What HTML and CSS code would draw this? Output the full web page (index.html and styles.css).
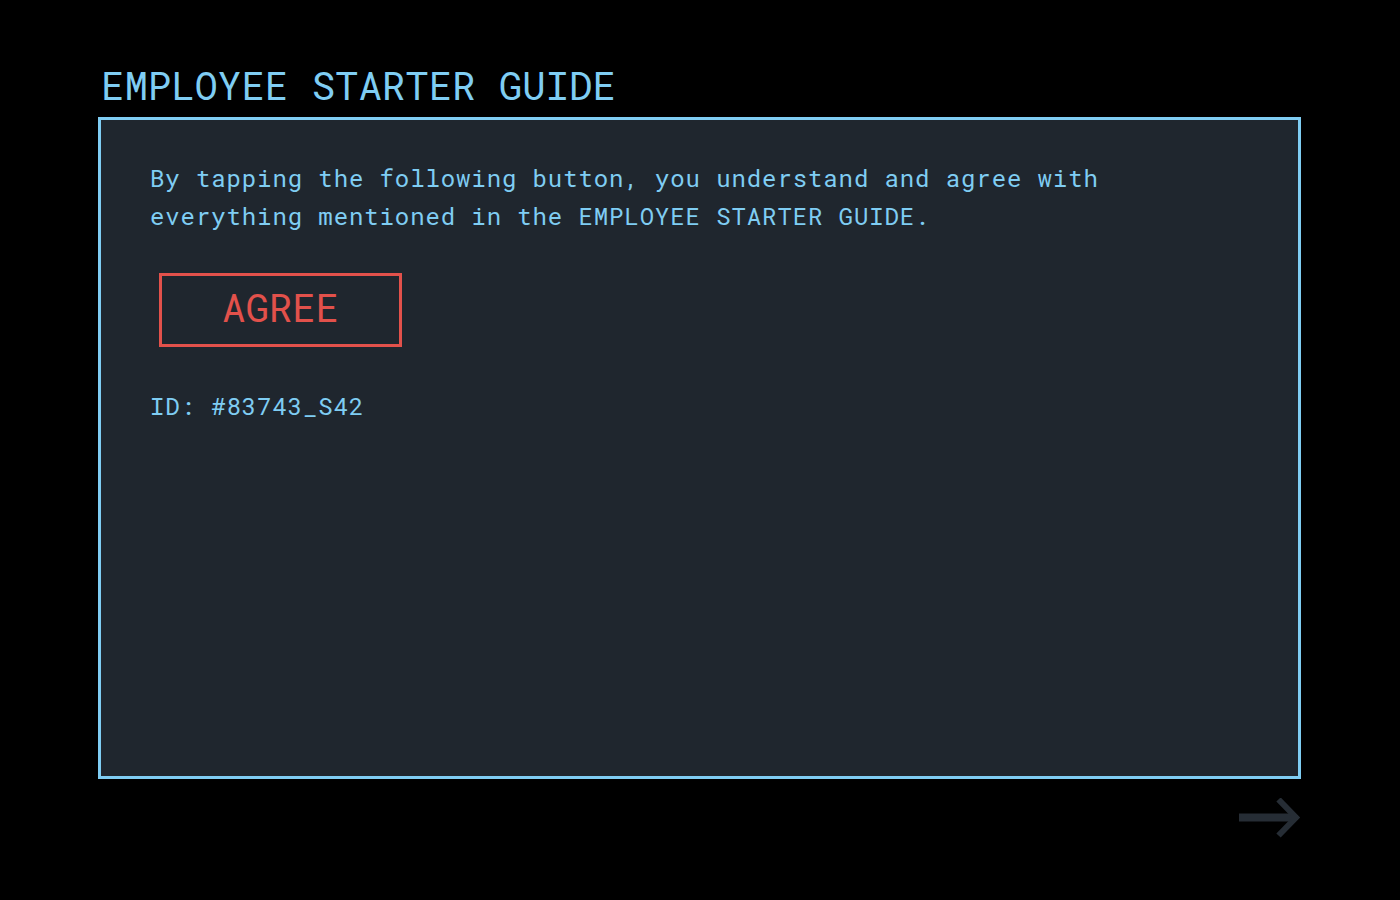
FILE: index.html
```html
<!DOCTYPE html>
<html lang="en">
<head>
<meta charset="utf-8">
<title>Employee Starter Guide</title>
<link rel="stylesheet" href="styles.css">
</head>
<body>
<main class="page">
  <h1 class="title">EMPLOYEE STARTER GUIDE</h1>
  <section class="card">
    <p class="notice">By tapping the following button, you understand and agree with<br>everything mentioned in the EMPLOYEE STARTER GUIDE.</p>
    <button class="agree" type="button">AGREE</button>
    <p class="ident">ID: #83743_S42</p>
  </section>
  <div class="footer">
    <svg class="arrow" width="62" height="40" viewBox="0 0 62 40" aria-hidden="true">
      <rect x="0" y="15.5" width="55" height="8" fill="#262d35"/>
      <path d="M39.5 1.5 L57 19.5 L39.5 37.5" stroke="#262d35" stroke-width="6" fill="none" stroke-linejoin="miter"/>
    </svg>
  </div>
</main>
</body>
</html>
```

FILE: styles.css
```css
html, body {
  margin: 0;
  padding: 0;
  background: #000;
}
body {
  width: 1400px;
  height: 900px;
  overflow: hidden;
  font-family: "Roboto Mono", "DejaVu Sans Mono", "Liberation Mono", monospace;
  color: #7fcdf3;
}
.page {
  width: 1203px;
  margin: 0 0 0 98px;
  padding-top: 60px;
}
.title {
  margin: 0 0 6px 3px;
  font-weight: 400;
  font-size: 39px;
  line-height: 51px;
  letter-spacing: 0;
  color: #7fcdf3;
}
.card {
  box-sizing: border-box;
  height: 662px;
  border: 3px solid #7fcdf3;
  background: #1f262e;
  padding: 39px 49px;
  display: flex;
  flex-direction: column;
  align-items: flex-start;
}
.notice {
  margin: 0;
  font-size: 24px;
  line-height: 38px;
  letter-spacing: 0.9px;
}
.agree {
  margin: 38px 0 0 9px;
  width: 243px;
  height: 74px;
  box-sizing: border-box;
  border: 3px solid #e2514b;
  background: transparent;
  color: #e2514b;
  font-family: "Roboto Mono", "DejaVu Sans Mono", "Liberation Mono", monospace;
  font-size: 39px;
  line-height: 46px;
  letter-spacing: 0;
  padding: 0 0 6px;
  cursor: pointer;
}
.ident {
  margin: 40px 0 0;
  font-size: 24px;
  line-height: 38px;
  letter-spacing: 0.9px;
}
.footer {
  display: flex;
  justify-content: flex-end;
  padding-top: 19px;
}
.arrow {
  display: block;
}
```
